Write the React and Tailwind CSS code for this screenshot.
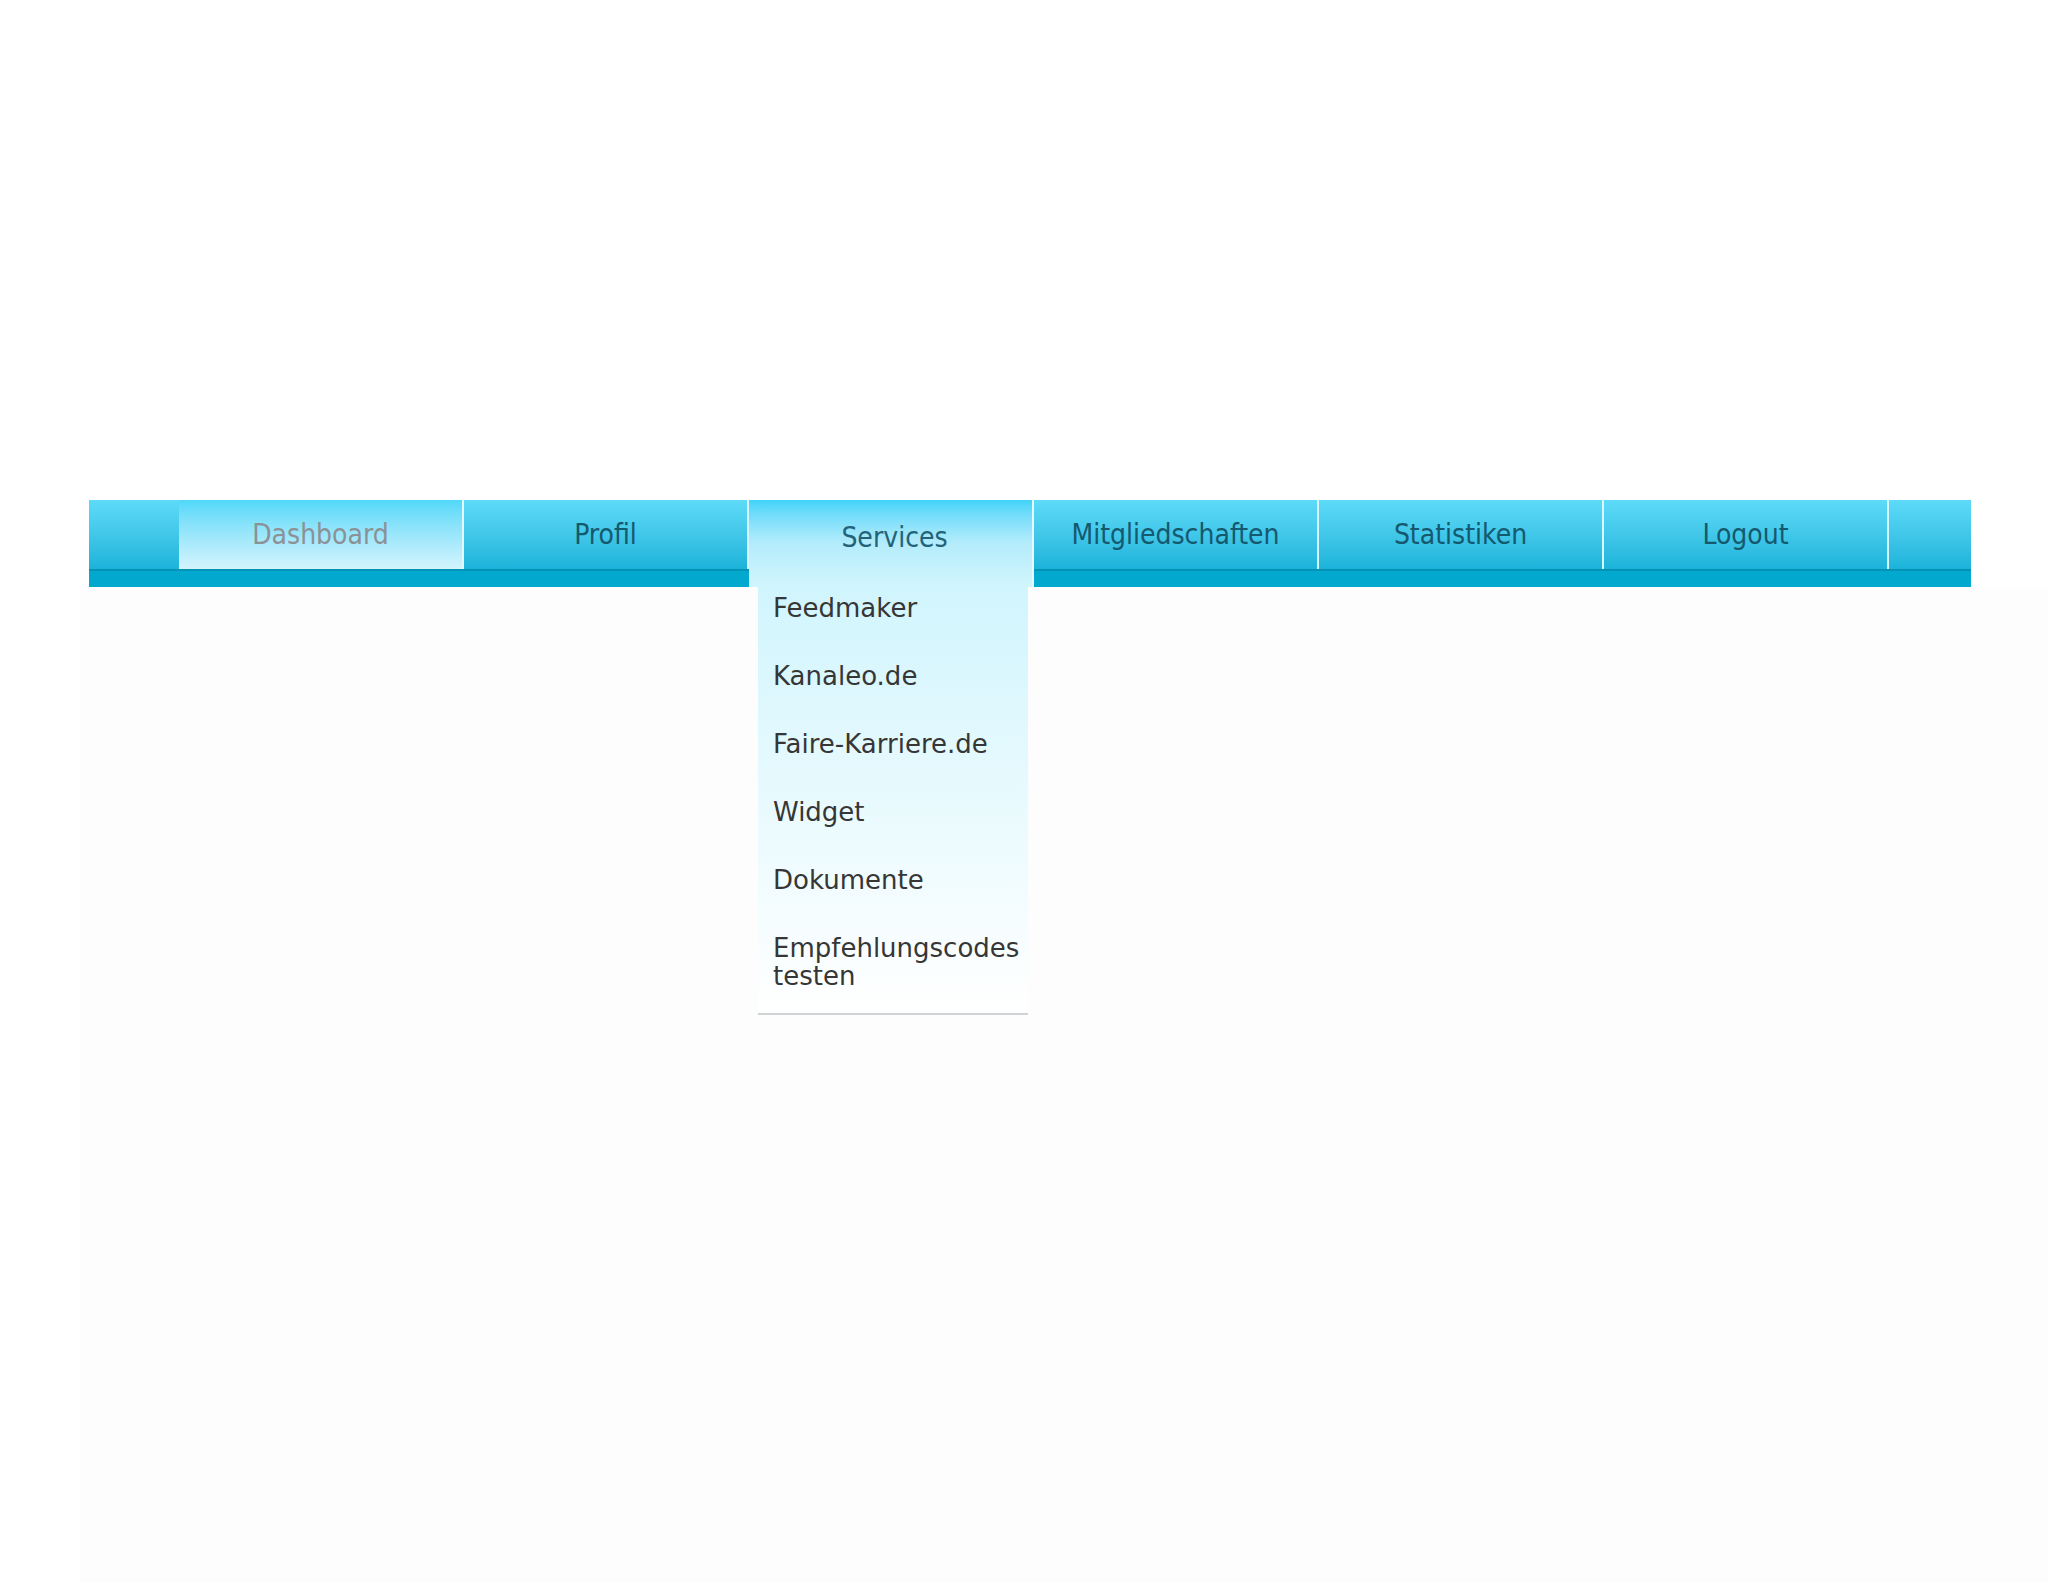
import React from 'react';

const tabs = ['Dashboard', 'Profil', 'Services', 'Mitgliedschaften', 'Statistiken', 'Logout'];
const services = ['Feedmaker', 'Kanaleo.de', 'Faire-Karriere.de', 'Widget', 'Dokumente', 'Empfehlungscodes testen'];

const tabFont = { fontFamily: '"DejaVu Sans Condensed", "DejaVu Sans", sans-serif', fontStretch: 'condensed' };
const menuFont = { fontFamily: '"DejaVu Sans", "Noto Sans", sans-serif' };

const Strip = () => (
  <div className="h-[18px] bg-[#03a8cf] border-t-2 border-[#0592b4]" />
);

const Cap = ({ width }) => (
  <div className={`flex flex-col ${width}`}>
    <div className="h-[69px] bg-gradient-to-b from-[#5ddbf8] to-[#1ab3da]" />
    <Strip />
  </div>
);

const Tab = ({ label }) => {
  if (label === 'Services') {
    return (
      <div className="relative w-[285px] h-[87px]">
        <div className="h-full flex justify-center pt-[22px] pl-[8px] bg-gradient-to-b from-[#3fd4f9] via-[#b4ecfb] to-[#d1f5fd] border-r-2 border-[#e6f8fd]">
          <span className="text-[28px] leading-[32px] text-[#23637a]" style={tabFont}>Services</span>
        </div>
        <div className="absolute top-[87px] left-[9px] w-[270px] bg-gradient-to-b from-[#d1f5fd] to-white border-b-2 border-[#cfd3d6] pb-[16px] z-10">
          <ul className="flex flex-col gap-[26px]" style={menuFont}>
            {services.map((s) => (
              <li key={s} className="py-[7px] pl-[15px] pr-[14px] text-[26px] leading-[28px] text-[#363636]">{s}</li>
            ))}
          </ul>
        </div>
      </div>
    );
  }

  const active = label === 'Dashboard';
  return (
    <div className="flex flex-col w-[285px]">
      <div
        className={`h-[69px] flex items-center justify-center border-r-2 ${
          active
            ? 'bg-gradient-to-b from-[#4fd8f9] to-[#d3f4fd] border-[#e4f7fc]'
            : 'bg-gradient-to-b from-[#5ddbf8] to-[#1ab3da] border-[#d8f6fd]'
        }`}
      >
        <span className={`text-[28px] leading-[32px] ${active ? 'text-[#8c9196]' : 'text-[#15596f]'}`} style={tabFont}>
          {label}
        </span>
      </div>
      <Strip />
    </div>
  );
};

export default function App() {
  return (
    <div className="h-[1582px] flex flex-col bg-white">
      <div className="h-[500px]" />
      <nav className="flex ml-[89px] w-[1882px] relative z-10">
        <Cap width="w-[90px]" />
        {tabs.map((t) => (
          <Tab key={t} label={t} />
        ))}
        <Cap width="w-[82px]" />
      </nav>
      <main className="flex-1 ml-[80px] bg-[#fdfdfd]" />
    </div>
  );
}
